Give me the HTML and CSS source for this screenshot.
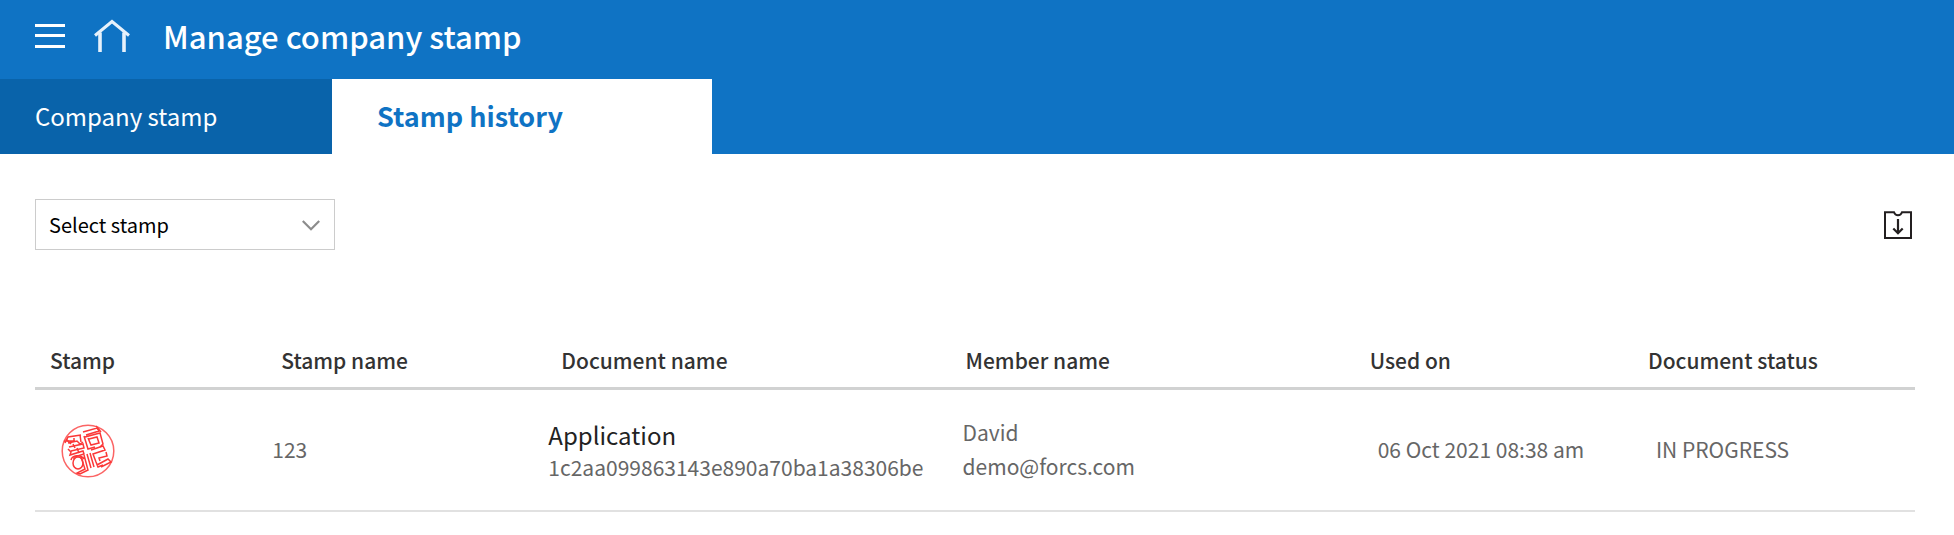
FILE: index.html
```html
<!DOCTYPE html>
<html lang="en">
<head>
<meta charset="utf-8">
<meta name="viewport" content="width=device-width, initial-scale=1">
<title>Manage company stamp</title>
<link rel="stylesheet" href="styles.css">
</head>
<body>
<header class="topbar">
  <div class="heading">
    <button class="icon-button" type="button" aria-label="Menu">
      <svg width="30" height="24" viewBox="0 0 30 24" fill="#fff"><path d="M0 0h30v3H0zM0 10h30v3H0zM0 21h30v3H0z"/></svg>
    </button>
    <a class="home" href="#home" aria-label="Home">
      <svg width="36" height="34" viewBox="0 0 36 34" fill="none" stroke="#e6f1fb"><path d="M1 16.500 18 2.500 35 16.500" stroke-width="3"/><path d="M6 13.500V33M30 13.500V33" stroke-width="3.600"/></svg>
    </a>
    <h1 class="title">Manage company stamp</h1>
  </div>
  <nav class="tabs">
    <a class="tab" href="#stamp">Company stamp</a>
    <a class="tab tab-active" href="#history" aria-current="page">Stamp history</a>
  </nav>
</header>
<main class="content">
  <div class="toolbar">
    <div class="picker">
      <select class="picker-select" aria-label="Select stamp"><option>Select stamp</option></select>
      <svg class="picker-arrow" width="18" height="11" viewBox="0 0 18 11" fill="none" stroke="#8c8c8c" stroke-width="2.200"><path d="M.8 1 9 9.300 17.200 1"/></svg>
    </div>
    <button class="icon-button" type="button" aria-label="Download">
      <svg width="28" height="28" viewBox="0 0 28 28" fill="none" stroke="#231f20" stroke-width="2"><path d="M10 1.200H1V27H27V1.200H18Q17 4.200 14 4.200T10 1.200Z"/><path d="M14 8V22M9.300 17.500 14 22.200 18.700 17.500" stroke-width="2.200"/></svg>
    </button>
  </div>
  <table class="history">
    <colgroup><col class="col-stamp"><col class="col-name"><col class="col-document"><col class="col-member"><col class="col-date"><col class="col-status"></colgroup>
    <thead>
      <tr><th scope="col">Stamp</th><th scope="col">Stamp name</th><th scope="col">Document name</th><th scope="col">Member name</th><th scope="col">Used on</th><th scope="col">Document status</th></tr>
    </thead>
    <tbody>
      <tr>
        <td class="cell-stamp">
          <svg width="54" height="54" viewBox="0 0 54 54" fill="none" stroke="#fb3838" stroke-width="1.500" role="img" aria-label="Red seal">
            <circle cx="27" cy="27" r="25.800" stroke="#fb6464"/>
            <path d="M4 19 7 13 20 11M3 17 13 17 13 14M7 19 16 17 19 20 22 18"/>
            <path d="M8 23 22 20 23 24 10 27M7 25 10 28 9 31 22 27 23 30 13 33 13 35"/>
            <path d="M12 20 14 24M19 11 20 18M5 15 10 20M16 24 18 29"/>
            <ellipse cx="17" cy="39" rx="5" ry="6"/>
            <path d="M10 36C11 31 20 30 23 35M23 31 27 46 19 50 16 49 24 45 20 33M26 30 30 44M29 29 33 43"/>
            <path d="M22 8 36 4 38 7 25 11M24 13 39 9 42 20 39 23M23 12 27 25 34 23M27 14 30 21 38 19 36 13 28 15M35 2 40 8"/>
            <path d="M30 26 42 22 44 26 32 30 35 38M45 28 46 32 38 34 39 37M36 41 47 35 50 38 40 43M35 38 37 43 42 41"/>
          </svg>
        </td>
        <td class="cell-name">123</td>
        <td class="cell-document"><span class="line document-name">Application</span><span class="line">1c2aa099863143e890a70ba1a38306be</span></td>
        <td class="cell-member"><span class="line">David</span><span class="line">demo@forcs.com</span></td>
        <td class="cell-late">06 Oct 2021 08:38 am</td>
        <td class="cell-late">IN PROGRESS</td>
      </tr>
    </tbody>
  </table>
</main>
</body>
</html>
```
FILE: styles.css
```css
* { box-sizing: border-box; }
body {
  margin: 0;
  background: #fff;
  color: #666;
  font-family: "Noto Sans CJK KR", "Noto Sans", sans-serif;
  font-size: 21px;
}
svg { display: block; }
.icon-button { padding: 0; border: 0; background: none; cursor: pointer; }
.topbar { background: #0f73c4; color: #fff; }
.heading {
  display: flex;
  align-items: center;
  height: 79px;
  padding: 0 35px 8px;
}
.home { margin: 0 33px 0 29px; }
.title { margin: 0; font-size: 31px; font-weight: 500; line-height: 48px; }
.tabs { display: flex; height: 75px; }
.tab {
  width: 332px;
  padding-left: 35px;
  background: #0963aa;
  color: #fff;
  font-size: 24px;
  line-height: 74px;
  text-decoration: none;
  white-space: nowrap;
}
.tab-active {
  width: 380px;
  padding-left: 45px;
  background: #fff;
  color: #0f73c4;
  font-size: 27px;
  font-weight: 700;
}
.content { padding: 45px 39px 24px 35px; }
.toolbar {
  display: flex;
  align-items: center;
  justify-content: space-between;
  padding-right: 3px;
}
.picker { position: relative; width: 300px; }
.picker-select {
  appearance: none;
  display: block;
  width: 100%;
  height: 51px;
  padding: 0 40px 0 13px;
  border: 1px solid #ccc;
  border-radius: 0;
  background: #fff;
  color: #000;
  font-family: inherit;
  font-size: 20px;
}
.picker-arrow { position: absolute; top: 21px; right: 15px; pointer-events: none; }
.history {
  width: 100%;
  margin-top: 83px;
  border-spacing: 0;
  table-layout: fixed;
}
.col-stamp { width: 12.3%; }
.col-name { width: 14.9%; }
.col-document { width: 21.5%; }
.col-member { width: 21.5%; }
.col-date { width: 14.8%; }
.col-status { width: 15%; }
th {
  height: 57px;
  padding: 0 0 0 15px;
  border-bottom: 3px solid #d1d2d2;
  color: #333;
  font-weight: 500;
  line-height: 32px;
  text-align: left;
}
td {
  height: 122px;
  padding: 0 0 2px;
  border-bottom: 2px solid #e1e1e1;
  line-height: 34px;
  white-space: nowrap;
}
.cell-stamp { padding: 2px 0 0 26px; }
.cell-name { padding-left: 6px; }
.cell-document { padding: 1px 0 0 2px; line-height: 32px; }
.cell-member { padding-left: 12px; }
.cell-late { padding-left: 23px; }
.line { display: block; }
.document-name { color: #222; font-size: 24px; }
```
